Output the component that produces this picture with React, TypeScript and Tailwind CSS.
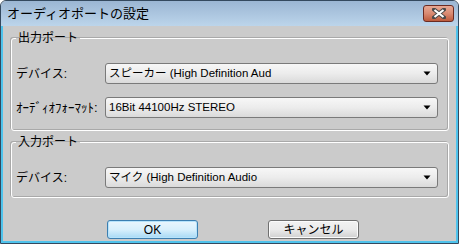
const font = { fontFamily: '"Liberation Sans", "Noto Sans CJK JP", sans-serif' }

function Combo({ text }: { text: string }) {
  return (
    <div className="flex-1 h-[21px] flex items-center justify-between pl-[3px] pr-[6px] border border-[#7a7a7a] rounded-[3px] bg-gradient-to-b from-[#f7f7f7] via-[#ececec] to-[#dadada] text-[11.5px] text-black">
      <span className="whitespace-nowrap leading-none">{text}</span>
      <svg width="8" height="5" viewBox="0 0 8 5">
        <path d="M0.5 0.5h7L4 4.5z" fill="#000" />
      </svg>
    </div>
  )
}

function Row({ label, text, small }: { label: string; text: string; small?: boolean }) {
  return (
    <div className="flex items-center h-[21px]">
      <span className={`w-[89px] whitespace-nowrap text-black ${small ? 'text-[13px]' : 'text-[12px]'}`}>{label}</span>
      <Combo text={text} />
    </div>
  )
}

function Group({ title, children, className }: { title: string; children: React.ReactNode; className: string }) {
  return (
    <fieldset
      className={`border border-white rounded-[3px] pl-[4px] pr-[10px] shadow-[-1px_-1px_0_#a9a9a9,inset_-1px_-1px_0_#a9a9a9] ${className}`}
    >
      <legend className="px-[2px] text-[12px] leading-[14px] text-black">{title}</legend>
      {children}
    </fieldset>
  )
}

export default function App() {
  return (
    <div
      className="w-[459px] h-[244px] flex flex-col border border-[#34495e] rounded-t-[6px] overflow-hidden bg-[#cbcbcb]"
      style={font}
    >
      <div className="h-[25px] shrink-0 flex items-center justify-between pl-[6px] pr-[4px] bg-gradient-to-b from-[#9bb6d3] to-[#bcd5eb]">
        <span className="text-[13px] text-black">オーディオポートの設定</span>
        <div className="w-[31px] h-[17px] mb-[1px] flex items-center justify-center rounded-[3px] border border-[#6b2b22] bg-gradient-to-b from-[#e7a894] via-[#d98a72] to-[#bd5a3c]">
          <svg width="14" height="11" viewBox="0 0 14 11">
            <path d="M2 1.5L12 9.5M12 1.5L2 9.5" stroke="#4a4a4a" strokeWidth="4" strokeLinecap="square" />
            <path d="M2.5 2L11.5 9M11.5 2L2.5 9" stroke="#ffffff" strokeWidth="2.2" />
          </svg>
        </div>
      </div>
      <div className="flex-1 flex flex-col border-x-2 border-b-2 border-[#4fc3ec] pl-[8px] pr-[7px]">
        <Group title="出力ポート" className="mt-[5px] pt-[18px] pb-[12px]">
          <div className="flex flex-col gap-[13px]">
            <Row label="デバイス:" text="スピーカー (High Definition Aud" />
            <Row label="ｵｰﾃﾞｨｵﾌｫｰﾏｯﾄ:" text="16Bit 44100Hz STEREO" small />
          </div>
        </Group>
        <Group title="入力ポート" className="mt-[4px] pt-[18px] pb-[9px]">
          <Row label="デバイス:" text="マイク (High Definition Audio" />
        </Group>
        <div className="flex mt-[22px] pl-[96px] gap-[70px]">
          <button className="w-[91px] h-[19px] rounded-[3px] border border-[#3c7fb1] bg-gradient-to-b from-[#eaf6fd] via-[#d9f0fc] to-[#a7d9f5] text-[12px] leading-none text-black shadow-[inset_0_0_0_1px_#b7e3fb]">
            OK
          </button>
          <button className="w-[91px] h-[19px] rounded-[3px] border border-[#707070] bg-gradient-to-b from-[#f2f2f2] via-[#ebebeb] to-[#d0d0d0] text-[12px] leading-none text-black shadow-[inset_0_0_0_1px_#fcfcfc]">
            キャンセル
          </button>
        </div>
      </div>
    </div>
  )
}
